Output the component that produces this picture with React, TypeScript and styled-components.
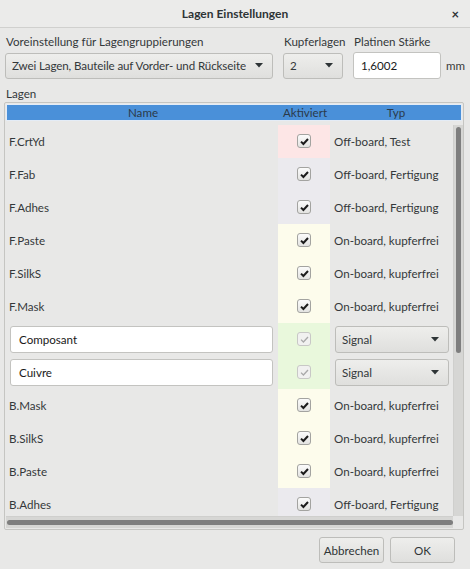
import React, { FC } from "react";
import styled, { createGlobalStyle } from "styled-components";

type Tone = "pink" | "lav" | "yellow" | "green";

interface ILayer {
	name: string;
	type: string;
	tone: Tone;
	editable?: boolean;
}

const layers: ILayer[] = [
	{ name: "F.CrtYd", type: "Off-board, Test", tone: "pink" },
	{ name: "F.Fab", type: "Off-board, Fertigung", tone: "lav" },
	{ name: "F.Adhes", type: "Off-board, Fertigung", tone: "lav" },
	{ name: "F.Paste", type: "On-board, kupferfrei", tone: "yellow" },
	{ name: "F.SilkS", type: "On-board, kupferfrei", tone: "yellow" },
	{ name: "F.Mask", type: "On-board, kupferfrei", tone: "yellow" },
	{ name: "Composant", type: "Signal", tone: "green", editable: true },
	{ name: "Cuivre", type: "Signal", tone: "green", editable: true },
	{ name: "B.Mask", type: "On-board, kupferfrei", tone: "yellow" },
	{ name: "B.SilkS", type: "On-board, kupferfrei", tone: "yellow" },
	{ name: "B.Paste", type: "On-board, kupferfrei", tone: "yellow" },
	{ name: "B.Adhes", type: "Off-board, Fertigung", tone: "lav" },
];

const toneColors: Record<Tone, string> = {
	pink: "#fde6e6",
	lav: "#ebeaee",
	yellow: "#fdfcec",
	green: "#e9f8dc",
};

const Arrow: FC = () => (
	<ArrowIcon width="8" height="5" viewBox="0 0 8 5">
		<path d="M0 0 H8 L4 4.5 Z" fill="#2e3436" />
	</ArrowIcon>
);

const Check: FC<{ disabled?: boolean }> = ({ disabled }) => (
	<CheckBox $disabled={disabled}>
		<svg width="11" height="11" viewBox="0 0 11 11">
			<path
				d="M2 5.6 L4.4 8 L9 3"
				fill="none"
				stroke={disabled ? "#a9a9a9" : "#1c1c1c"}
				strokeWidth={disabled ? 1.3 : 2}
			/>
		</svg>
	</CheckBox>
);

const App: FC = () => {
	return (
		<Window>
			<GlobalStyle />
			<TitleBar>
				<Title>Lagen Einstellungen</Title>
				<Close>×</Close>
			</TitleBar>
			<Content>
				<TopGrid>
					<Label>Voreinstellung für Lagengruppierungen</Label>
					<Label>Kupferlagen</Label>
					<Label>Platinen Stärke</Label>
					<span />
					<Combo>
						<ComboText $tight>Zwei Lagen, Bauteile auf Vorder- und Rückseite</ComboText>
						<Arrow />
					</Combo>
					<Combo>
						<ComboText>2</ComboText>
						<Arrow />
					</Combo>
					<TextInput>1,6002</TextInput>
					<Unit>mm</Unit>
				</TopGrid>
				<SectionLabel>Lagen</SectionLabel>
				<TableFrame>
					<Header>
						<HeadCell>Name</HeadCell>
						<HeadCell>Aktiviert</HeadCell>
						<HeadCell>Typ</HeadCell>
					</Header>
					<TableBody>
						<Rows>
							{layers.map((l) => (
								<Row key={l.name}>
									<NameCell>
										{l.editable ? <NameInput>{l.name}</NameInput> : l.name}
									</NameCell>
									<ActiveCell $tone={l.tone}>
										<Check disabled={l.editable} />
									</ActiveCell>
									<TypeCell>
										{l.editable ? (
											<RowCombo>
												<ComboText>{l.type}</ComboText>
												<Arrow />
											</RowCombo>
										) : (
											l.type
										)}
									</TypeCell>
								</Row>
							))}
						</Rows>
						<VTrough>
							<VThumb />
						</VTrough>
						<HTrough>
							<HThumb />
						</HTrough>
					</TableBody>
				</TableFrame>
				<Footer>
					<Button>Abbrechen</Button>
					<Button>OK</Button>
				</Footer>
			</Content>
		</Window>
	);
};

export default App;

const GlobalStyle = createGlobalStyle`
	html, body {
		margin: 0;
		padding: 0;
		background: #e8e8e7;
	}
	body {
		font-family: Lato, "Noto Sans", sans-serif;
		font-size: 11.6px;
		color: #34383a;
	}
`;

const Window = styled.div`
	width: 470px;
	height: 569px;
	display: flex;
	flex-direction: column;
	background: #e8e8e7;
	overflow: hidden;
`;

const TitleBar = styled.div`
	height: 28px;
	flex: none;
	position: relative;
	display: flex;
	align-items: center;
	justify-content: center;
	background: #ebebea;
	border-bottom: 1px solid #d0d0ce;
	box-sizing: border-box;
`;

const Title = styled.div`
	font-weight: bold;
	font-size: 12px;
	color: #2e3436;
`;

const Close = styled.div`
	position: absolute;
	right: 11px;
	top: 6px;
	font-size: 13px;
	font-weight: bold;
	color: #2e3436;
`;

const Content = styled.div`
	flex: 1;
	display: flex;
	flex-direction: column;
	padding: 6px 6px 0 4px;
`;

const TopGrid = styled.div`
	display: grid;
	grid-template-columns: 268px 60px 88px auto;
	column-gap: 10px;
	row-gap: 2px;
	align-items: center;
	padding-left: 1px;
`;

const Label = styled.div`
	height: 16px;
	line-height: 16px;
	white-space: nowrap;
	padding-left: 1px;
`;

const Combo = styled.div`
	height: 26px;
	box-sizing: border-box;
	display: flex;
	align-items: center;
	justify-content: space-between;
	padding: 0 9px 0 6px;
	border: 1px solid #bdbdba;
	border-radius: 3px;
	background: linear-gradient(#eeeeec, #dfdfdd);
	white-space: nowrap;
	overflow: hidden;
	gap: 4px;
`;

const ComboText = styled.span<{ $tight?: boolean }>`
	overflow: hidden;
	min-width: 0;
	letter-spacing: ${(p) => (p.$tight ? "-0.12px" : "normal")};
`;

const ArrowIcon = styled.svg`
	flex: none;
`;

const TextInput = styled.div`
	height: 27px;
	box-sizing: border-box;
	display: flex;
	align-items: center;
	padding-left: 7px;
	border: 1px solid #c3c3c0;
	border-radius: 3px;
	background: #ffffff;
	color: #1a1a1a;
`;

const Unit = styled.div`
	margin-left: -5px;
	color: #3b3b3b;
`;

const SectionLabel = styled.div`
	margin-top: 6px;
	height: 17px;
	line-height: 17px;
	padding-left: 2px;
`;

const TableFrame = styled.div`
	height: 428px;
	width: 460px;
	box-sizing: border-box;
	border: 1px solid #c5c5c2;
	border-radius: 2px;
	padding: 1px;
	display: flex;
	flex-direction: column;
`;

const Header = styled.div`
	height: 17px;
	flex: none;
	display: grid;
	grid-template-columns: 272px 52px 1fr;
	background: #4a90d9;
	border: 1px solid #e4ecf6;
	box-sizing: border-box;
`;

const HeadCell = styled.div`
	text-align: center;
	line-height: 15px;
	color: #2a3a4a;
`;

const TableBody = styled.div`
	flex: 1;
	margin-top: 4px;
	display: grid;
	grid-template-columns: 1fr 10px;
	grid-template-rows: 1fr 12px;
	min-height: 0;
`;

const Rows = styled.div`
	overflow: hidden;
	min-height: 0;
`;

const Row = styled.div`
	height: 33px;
	display: grid;
	grid-template-columns: 272px 52px 1fr;
`;

const NameCell = styled.div`
	display: flex;
	align-items: center;
	padding: 0 5px 0 3px;
	white-space: nowrap;
`;

const ActiveCell = styled.div<{ $tone: Tone }>`
	display: flex;
	align-items: center;
	justify-content: center;
	background: ${(p) => toneColors[p.$tone]};
`;

const TypeCell = styled.div`
	display: flex;
	align-items: center;
	padding: 0 4px 0 4px;
	white-space: nowrap;
	overflow: hidden;
`;

const NameInput = styled(TextInput)`
	width: 100%;
	margin-left: 1px;
	padding-left: 8px;
`;

const RowCombo = styled(Combo)`
	width: 100%;
	height: 27px;
	margin-left: 1px;
	padding-right: 9px;
`;

const CheckBox = styled.div<{ $disabled?: boolean }>`
	width: 14px;
	height: 14px;
	box-sizing: border-box;
	border: 1px solid ${(p) => (p.$disabled ? "#c8c8c6" : "#a3a3a0")};
	border-radius: 3px;
	background: ${(p) =>
		p.$disabled ? "#f1f1f0" : "linear-gradient(#fbfbfb, #e3e3e1)"};
	display: flex;
	align-items: center;
	justify-content: center;
	margin-top: -1px;
`;

const VTrough = styled.div`
	background: #d6d6d4;
	border-left: 1px solid #cfcfcd;
	display: flex;
	justify-content: center;
	padding-top: 2px;
`;

const VThumb = styled.div`
	width: 5px;
	height: 226px;
	border-radius: 3px;
	background: #7e7e7e;
`;

const HTrough = styled.div`
	background: #d6d6d4;
	border-top: 1px solid #cfcfcd;
	display: flex;
	align-items: center;
	padding-left: 1px;
`;

const HThumb = styled.div`
	width: 446px;
	height: 5px;
	border-radius: 3px;
	background: #7e7e7e;
`;

const Footer = styled.div`
	display: flex;
	justify-content: flex-end;
	gap: 6px;
	padding: 7px 9px 0 0;
`;

const Button = styled.div`
	width: 65px;
	height: 26px;
	box-sizing: border-box;
	display: flex;
	align-items: center;
	justify-content: center;
	border: 1px solid #bdbdba;
	border-radius: 3px;
	background: linear-gradient(#eeeeec, #dfdfdd);
	color: #2e3436;
`;
